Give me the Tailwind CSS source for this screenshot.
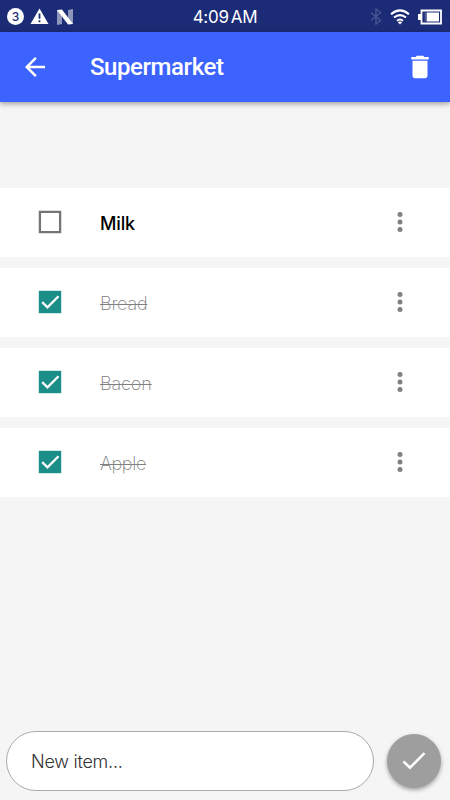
<!DOCTYPE html>
<html lang="en">
<head>
<meta charset="utf-8">
<title>Supermarket</title>
<script src="https://cdn.jsdelivr.net/npm/@tailwindcss/browser@4"></script>
</head>
<body class="w-[450px] h-[800px] overflow-hidden bg-[#f5f5f5] font-['Inter',sans-serif] flex flex-col">
<div class="h-8 shrink-0 bg-[#1b2b75] grid grid-cols-3 items-center text-white">
  <div class="flex items-center pl-[7px] gap-[6px]">
    <div class="size-[17px] rounded-full bg-white text-[#1b2b75] text-[12px] leading-none font-medium flex items-center justify-center">3</div>
    <svg width="19" height="17" viewBox="0 0 19 17"><path d="M9.500.500 18.500 16H.5Z" fill="#fff"/><path d="M9.500 5.500v5.300M9.500 12.300v2" stroke="#1b2b75" stroke-width="1.800"/></svg>
    <svg class="ml-[2px]" width="16" height="16" viewBox="0 0 16 16"><path d="M0 1H5V15L0 16ZM11 1 16 0V15H11Z" fill="#8d95ba"/><path d="M0 1 5 .5 16 15 11 15.500Z" fill="#fff"/></svg>
  </div>
  <div class="pt-px text-center text-[17px] leading-8 tracking-[-0.250px] font-normal whitespace-nowrap"><span>4:09</span><span class="ml-[2px]">AM</span></div>
  <div class="flex items-center justify-end pr-[8px]">
    <svg width="12" height="17" viewBox="0 0 12 17" fill="none" stroke="#45538f" stroke-width="1.500"><path d="M1 4.500 10.500 12.500 6 16V1L10.500 4.500 1 12.500"/></svg>
    <svg class="ml-[8px]" width="20" height="16" viewBox="0 0 20 16" fill="none" stroke="#fff" stroke-width="2"><path d="M1 5.200Q10-2.500 19 5.200M4 8.600Q10 3.600 16 8.600M7 11.700Q10 9.200 13 11.700"/><path d="M7.700 13 10 15.600 12.300 13Q10 11.800 7.700 13Z" fill="#fff" stroke="none"/></svg>
    <svg class="ml-[8px]" width="24" height="16" viewBox="0 0 24 16"><path d="M0 5H3V11H0Z" fill="#fff"/><path d="M3.500 1.500H23V14.500H3.500Z" fill="none" stroke="#fff" stroke-width="1.800"/><path d="M8.500 3.500H21V12.500H8.500Z" fill="#fff"/><path d="M6.500 3.500H8.500V12.500H6.500Z" fill="#4a5893"/></svg>
  </div>
</div>
<header class="relative h-[70px] shrink-0 bg-[#3d63ff] flex items-center pl-[20px] pr-[15px] text-white shadow-[0_2px_5px_rgba(0,0,0,0.35)]">
  <svg width="30" height="30" viewBox="0 0 24 24" fill="#fff"><path d="M20 11H7.830l5.590-5.590L12 4l-8 8 8 8 1.410-1.410L7.830 13H20z"/></svg>
  <h1 class="ml-[40px] grow font-['Roboto',sans-serif] text-[24px] leading-7 tracking-[-0.420px] font-medium">Supermarket</h1>
  <svg width="30" height="30" viewBox="0 0 24 24" fill="#fff"><path d="M6 19c0 1.100.9 2 2 2h8c1.100 0 2-.9 2-2V7H6zM19 4h-3.500l-1-1h-5l-1 1H5v2h14z"/></svg>
</header>
<main class="grow flex flex-col gap-[10.200px] pt-[85.600px]">
  <div class="h-[69.800px] bg-white flex items-center pl-[35px] pr-[35px]">
    <svg width="30" height="30" viewBox="0 0 30 30"><path d="M4.900 4.900H25.100V25.100H4.900Z" fill="none" stroke="#757575" stroke-width="2.300"/></svg>
    <span class="ml-[35px] grow pt-[2px] text-[18px] tracking-[-0.150px] font-medium text-black">Milk</span>
    <svg width="30" height="30" viewBox="0 0 30 30" fill="#808080"><circle cx="15" cy="7.500" r="2.500"/><circle cx="15" cy="15" r="2.500"/><circle cx="15" cy="22.500" r="2.500"/></svg>
  </div>
  <div class="h-[69.800px] bg-white flex items-center pl-[35px] pr-[35px]">
    <svg width="30" height="30" viewBox="0 0 30 30"><path d="M3.800 3.800H26.200V26.200H3.800Z" fill="#1c8e8a"/><path d="M7.200 15.200 12.500 20.300 23.500 9.300" fill="none" stroke="#fff" stroke-width="2.300"/></svg>
    <span class="ml-[35px] grow pt-[2px] text-[18px] tracking-[-0.200px] font-extralight text-[#808080] line-through decoration-1">Bread</span>
    <svg width="30" height="30" viewBox="0 0 30 30" fill="#808080"><circle cx="15" cy="7.500" r="2.500"/><circle cx="15" cy="15" r="2.500"/><circle cx="15" cy="22.500" r="2.500"/></svg>
  </div>
  <div class="h-[69.800px] bg-white flex items-center pl-[35px] pr-[35px]">
    <svg width="30" height="30" viewBox="0 0 30 30"><path d="M3.800 3.800H26.200V26.200H3.800Z" fill="#1c8e8a"/><path d="M7.200 15.200 12.500 20.300 23.500 9.300" fill="none" stroke="#fff" stroke-width="2.300"/></svg>
    <span class="ml-[35px] grow pt-[2px] text-[18px] tracking-[-0.100px] font-extralight text-[#808080] line-through decoration-1">Bacon</span>
    <svg width="30" height="30" viewBox="0 0 30 30" fill="#808080"><circle cx="15" cy="7.500" r="2.500"/><circle cx="15" cy="15" r="2.500"/><circle cx="15" cy="22.500" r="2.500"/></svg>
  </div>
  <div class="h-[69.800px] bg-white flex items-center pl-[35px] pr-[35px]">
    <svg width="30" height="30" viewBox="0 0 30 30"><path d="M3.800 3.800H26.200V26.200H3.800Z" fill="#1c8e8a"/><path d="M7.200 15.200 12.500 20.300 23.500 9.300" fill="none" stroke="#fff" stroke-width="2.300"/></svg>
    <span class="ml-[35px] grow pt-[2px] text-[18px] tracking-[-0.300px] font-extralight text-[#808080] line-through decoration-1">Apple</span>
    <svg width="30" height="30" viewBox="0 0 30 30" fill="#808080"><circle cx="15" cy="7.500" r="2.500"/><circle cx="15" cy="15" r="2.500"/><circle cx="15" cy="22.500" r="2.500"/></svg>
  </div>
</main>
<footer class="shrink-0 flex items-center pl-[6px] pr-[9px] pb-[9px] justify-between">
  <div class="w-[368px] h-[60px] rounded-full border border-[#aaa] bg-white pl-[24px] flex items-center text-[18px] tracking-[-0.250px] font-light text-[#333]">New item...</div>
  <div class="size-[54px] rounded-full bg-[#9e9e9e] flex items-center justify-center shadow-[0_2px_4px_rgba(0,0,0,0.35)]">
    <svg width="30" height="30" viewBox="0 0 30 30" fill="none" stroke="#fff" stroke-width="2.500"><path d="M4.500 15.500 11 21.700 25.500 7.200"/></svg>
  </div>
</footer>
</body>
</html>
